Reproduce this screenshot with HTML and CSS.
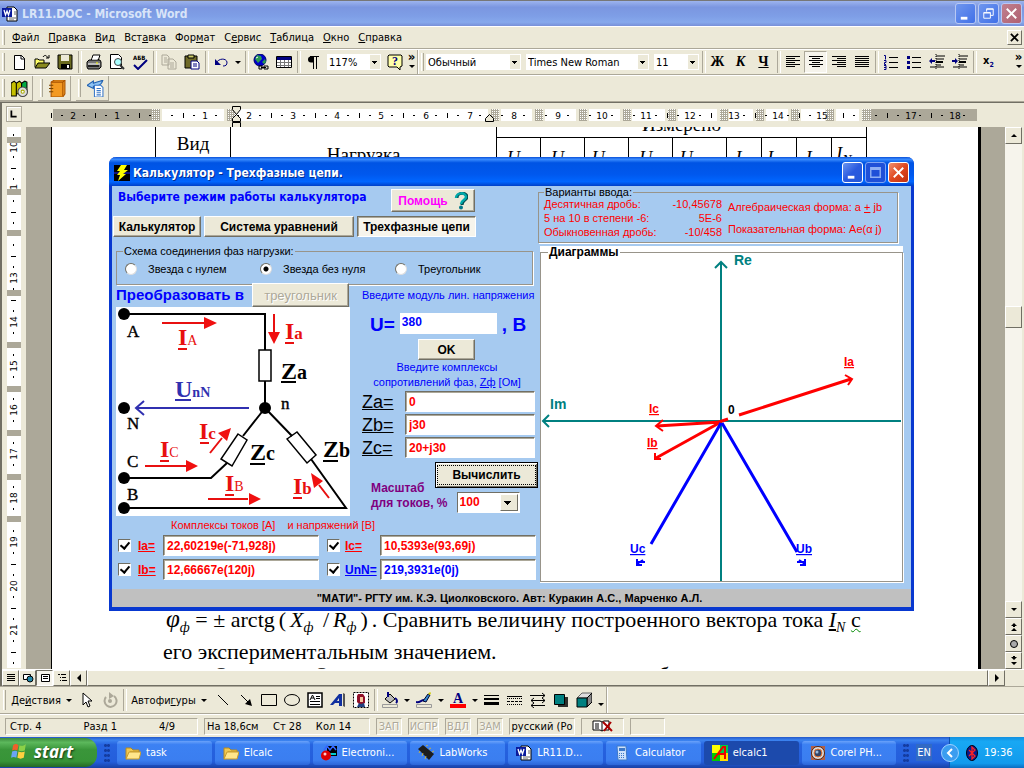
FILE: index.html
```html
<!DOCTYPE html>
<html lang="ru">
<head>
<meta charset="utf-8">
<title>LR11.DOC - Microsoft Word</title>
<link rel="stylesheet" href="styles.css">
</head>
<body>
<svg class="defs" aria-hidden="true">
  <symbol id="word" viewBox="0 0 16 16"><path d="M5 1h7l3 3v11H5z" fill="#fff" stroke="#000"/><path d="M12 6h2M12 8h2M7 12h7M7 14h5" stroke="#666"/><path d="M0 2h10v9H0z" fill="#0a1a9c"/><path d="M2 4l1.500 5L5 5l1.500 4L8 4" fill="none" stroke="#fff" stroke-width="1.300"/></symbol>
  <symbol id="folder" viewBox="0 0 16 16"><path d="M1 3h5l2 2h6v2H5L2 14H1z" fill="#f0c850" stroke="#b58a20"/><path d="M4 7h12l-2 7H1z" fill="#ffe68c" stroke="#c79a2c"/></symbol>
  <symbol id="outdent" viewBox="0 0 16 16"><path d="M7 2h9M1 13h14M7 5h8M7 11h5" stroke="#000"/><path d="M7 8h7" stroke="#000" stroke-width="2"/><path d="M7 0v16" stroke="#000" stroke-dasharray="1 1"/></symbol>
</svg>

<header class="titlebar">
  <svg class="i16"><use href="#word"/></svg>
  <h1>LR11.DOC - Microsoft Word</h1>
  <div class="winbtns faded">
    <button aria-label="Свернуть"><svg viewBox="0 0 18 18"><path d="M4 14h7" stroke="#fff" stroke-width="3"/></svg></button>
    <button aria-label="Восстановить"><svg viewBox="0 0 18 18"><path d="M7 7V4h7v7h-3M4 8h7v6H4zM4 8.500h7M7 4.500h7" fill="none" stroke="#fff"/></svg></button>
    <button class="close" aria-label="Закрыть"><svg viewBox="0 0 18 18"><path d="M4 4l10 10M14 4L4 14" stroke="#fff" stroke-width="2"/></svg></button>
  </div>
</header>

<nav class="menubar">
  <i class="grip"></i>
  <button><u>Ф</u>айл</button><button><u>П</u>равка</button><button><u>В</u>ид</button><button>Вст<u>а</u>вка</button><button>Фор<u>м</u>ат</button><button>С<u>е</u>рвис</button><button><u>Т</u>аблица</button><button><u>О</u>кно</button><button><u>С</u>правка</button>
  <button class="docclose" aria-label="Закрыть документ"><svg viewBox="0 0 10 10"><path d="M1 1l8 8M9 1L1 9" stroke="#000" stroke-width="2"/></svg></button>
</nav>

<div class="toolbar">
  <i class="grip"></i>
  <button class="tb" aria-label="Создать"><svg viewBox="0 0 16 16"><path d="M3.500 1.500h7l3 3v11h-10z" fill="#fff" stroke="#000"/><path d="M10 1v4h4" fill="none" stroke="#000"/></svg></button>
  <button class="tb" aria-label="Открыть"><svg viewBox="0 0 16 16"><path d="M1 13V5h3l1 1h5v3" fill="#ff6" stroke="#000"/><path d="M4 9h12l-4 5H1z" fill="#8a8a20" stroke="#000"/><path d="M9 3c2-3 4-1 5 1M15 1v3h-3" fill="none" stroke="#000"/></svg></button>
  <button class="tb" aria-label="Сохранить"><svg viewBox="0 0 16 16"><path d="M1 1h14v14H2l-1-1z" fill="#6a6a20" stroke="#000"/><path d="M4 1h8v6H4z" fill="#ece9d8"/><path d="M4 10h9v5H4z" fill="#000"/><path d="M10 11h2v3h-2z" fill="#fff"/></svg></button>
  <i class="sep"></i>
  <button class="tb" aria-label="Печать"><svg viewBox="0 0 16 16"><path d="M5 7l2-6h7l-2 6" fill="#fff" stroke="#000"/><path d="M1 8l2-2h11l1 2v5l-2 2H2l-1-2z" fill="#777" stroke="#000"/><path d="M7 3h5M6 5h5M2 10h12" stroke="#fff"/><path d="M2 12h11" stroke="#222" stroke-width="2"/><path d="M10 9h2" stroke="#ff0"/></svg></button>
  <button class="tb" aria-label="Просмотр"><svg viewBox="0 0 16 16"><path d="M1.500.500h8l3 3v11h-11z" fill="#fff" stroke="#000"/><circle cx="9" cy="8" r="3.500" fill="#aff" stroke="#444"/><path d="M11 11l4 4" stroke="#333" stroke-width="2"/></svg></button>
  <button class="tb" aria-label="Правописание"><svg viewBox="0 0 16 16"><path d="M2 11l4 4 9-9" fill="none" stroke="#000080" stroke-width="2"/><text x="1" y="6" class="abc">АБВ</text></svg></button>
  <i class="sep"></i>
  <button class="tb" aria-label="Копировать" disabled><svg viewBox="0 0 16 16"><path d="M1 1h5l2 2v8H1zM7 5h5l3 3v7H7z" fill="#ece9d8" stroke="#aca899"/><path d="M3 4h3M3 6h3M3 8h3M9 9h4M9 11h4M9 13h4" stroke="#aca899"/></svg></button>
  <button class="tb" aria-label="Вставить"><svg viewBox="0 0 16 16"><path d="M1 2h12v12H1z" fill="#6f6a28" stroke="#000"/><path d="M4 1h6v3H4z" fill="#cc6" stroke="#000"/><path d="M7 7h6l2 2v6H7z" fill="#fff" stroke="#000080"/><path d="M9 10h4M9 12h4" stroke="#000080"/></svg></button>
  <i class="sep"></i>
  <button class="tb" aria-label="Отменить"><svg viewBox="0 0 16 16"><path d="M3 9c3-5 10-5 11-1 0 3-1 4-4 4" fill="none" stroke="#000080"/><path d="M2 5v6h6z" fill="#000080"/></svg></button>
  <button class="dd" aria-label="Список отмен"><i class="tri"></i></button>
  <i class="sep"></i>
  <button class="tb" aria-label="Гиперссылка"><svg viewBox="0 0 16 16"><circle cx="7" cy="6" r="6" fill="#00c" stroke="#006"/><path d="M4 1l4 1 1 3-4 4-3-4zM9 8l3-3 1 3-2 2z" fill="#2a9a55"/><path d="M3 4l2-1" stroke="#fff"/><path d="M6 12h3v3H6zM11 12h4v3h-4zM8 13.500h5" fill="#ddd" stroke="#000"/></svg></button>
  <button class="tb" aria-label="Таблица"><svg viewBox="0 0 16 16"><path d="M.500 2.500h15v11H.500z" fill="#fff" stroke="#000"/><path d="M1 3h14v3H1z" fill="#000080"/><path d="M1 8.500h14M1 11.500h14M4.500 6v7M8.500 6v7M12.500 6v7" stroke="#777"/></svg></button>
  <i class="sep"></i>
  <button class="tb" aria-label="Непечатаемые знаки"><svg viewBox="0 0 16 16"><path d="M8 2.500H6a3 3 0 0 0 0 6h2z" fill="#000"/><path d="M5 2.500h9M8.500 2v13M11.500 2v13" stroke="#000"/></svg></button>
  <label class="combo zoom"><select aria-label="Масштаб"><option>117%</option></select></label>
  <button class="tb" aria-label="Справка"><svg viewBox="0 0 16 16"><path d="M2 1h12l1 1v10l-2 1v3l-3-3H2l-1-1V2z" fill="#ffffa8" stroke="#000"/><text x="8" y="11" class="q">?</text></svg></button>
  <button class="more" aria-label="Другие кнопки"><b>»</b><i class="tri"></i></button>
  <i class="edge"></i>
  <i class="grip"></i>
  <label class="combo style"><select aria-label="Стиль"><option>Обычный</option></select></label>
  <label class="combo font"><select aria-label="Шрифт"><option>Times New Roman</option></select></label>
  <label class="combo size"><select aria-label="Размер"><option>11</option></select></label>
  <i class="sep"></i>
  <button class="tb letter">Ж</button><button class="tb letter"><em>К</em></button><button class="tb letter"><u>Ч</u></button>
  <i class="sep"></i>
  <button class="tb" aria-label="По левому краю"><svg viewBox="0 0 16 16"><path d="M1 2.500h14M1 4.500h9M1 6.500h14M1 8.500h9M1 10.500h14M1 12.500h9" stroke="#000"/></svg></button>
  <button class="tb pressed" aria-label="По центру"><svg viewBox="0 0 16 16"><path d="M1 2.500h14M4 4.500h8M1 6.500h14M4 8.500h8M1 10.500h14M4 12.500h8" stroke="#000"/></svg></button>
  <button class="tb" aria-label="По правому краю"><svg viewBox="0 0 16 16"><path d="M1 2.500h14M6 4.500h9M1 6.500h14M6 8.500h9M1 10.500h14M6 12.500h9" stroke="#000"/></svg></button>
  <button class="tb" aria-label="По ширине"><svg viewBox="0 0 16 16"><path d="M1 2.500h14M1 4.500h14M1 6.500h14M1 8.500h14M1 10.500h14M1 12.500h14" stroke="#000"/></svg></button>
  <i class="sep"></i>
  <button class="tb" aria-label="Нумерация"><svg viewBox="0 0 16 16"><path d="M6 3.500h9M6 8.500h9M6 13.500h9" stroke="#000"/><path d="M1 1.500h1.500v4M1 6.500h2v2H1.500v2H3M1 11.500h2v4H1M1 13.500h2" fill="none" stroke="#000080"/></svg></button>
  <button class="tb" aria-label="Маркеры"><svg viewBox="0 0 16 16"><path d="M6 3.500h9M6 8.500h9M6 13.500h9" stroke="#000"/><path d="M1 2h3v3H1zM1 7h3v3H1zM1 12h3v3H1z" fill="#000080"/></svg></button>
  <button class="tb" aria-label="Уменьшить отступ"><svg viewBox="0 0 16 16"><use href="#outdent"/><path d="M0 7l3-3v2h3v2H3v2z" fill="#000080"/></svg></button>
  <button class="tb" aria-label="Увеличить отступ"><svg viewBox="0 0 16 16"><use href="#outdent"/><path d="M6 7L3 4v2H0v2h3v2z" fill="#000080"/></svg></button>
  <i class="sep"></i>
  <button class="tb sub">x<sub>2</sub></button>
  <button class="more last" aria-label="Другие кнопки"><b>»</b><i class="tri"></i></button>
</div>

<div class="toolbar2">
  <div class="mini"><i class="grip"></i><button aria-label="Словари"><svg viewBox="0 0 16 16"><path d="M0 3l3-2 2 2v12H0zM5 3l3-2 2 2v10H5z" fill="#c6c000" stroke="#000"/><path d="M10 3l3-2 2 1v8h-5z" fill="#0a4" stroke="#000"/><circle cx="11" cy="11" r="4.500" fill="#ddd" stroke="#444"/><circle cx="11" cy="11" r="1.500" fill="#fff" stroke="#aa0"/></svg></button></div>
  <div class="mini"><i class="grip"></i><button aria-label="Книга"><svg viewBox="0 0 16 16"><path d="M2 2l3-2h10v13l-2 3H2z" fill="#f39a22" stroke="#a85200"/><path d="M2 2h11v13M13 2l2-2" fill="none" stroke="#a85200"/><path d="M0 5h4M0 8h4M0 11h4" stroke="#774400"/></svg></button></div>
  <div class="mini"><i class="grip"></i><button aria-label="Перевод"><svg viewBox="0 0 16 16"><path d="M0 5l6-4v2c5-2 8-2 9-3-1 4-4 6-9 6v2z" fill="#8fc4f4" stroke="#2060b0"/><path d="M7 5h6l2 2v9H7z" fill="#fff" stroke="#3a78c8"/><path d="M9 8h4M9 10h4M9 12h4M9 14h4" stroke="#3a78c8"/></svg></button></div>
</div>

<main class="work">
  <div class="hruler">
    <button class="tabstop" aria-label="Табуляция"><svg viewBox="0 0 16 16"><path d="M5 4v7h6" fill="none" stroke="#000" stroke-width="2"/></svg></button>
    <svg class="hscale" viewBox="22 102 984 25" width="984" height="25">
      <defs>
        <pattern id="ticks" x="73" y="108" width="44" height="12" patternUnits="userSpaceOnUse"><path d="M10 6h2v1h-2zM32 6h2v1h-2zM22 4h1v5h-1z" fill="#000"/></pattern>
        <pattern id="dots" width="2" height="2" patternUnits="userSpaceOnUse"><path d="M0 0h2v2H0z" fill="#aca899"/><path d="M0 0h1v1H0z" fill="#fff"/></pattern>
      </defs>
      <path d="M53 108h100v12H53zM871 108h106v12H871z" fill="#aca899"/>
      <path d="M162 108h62v12h-62zM235 108h253v12H235zM501 108h31v12h-31zM545 108h31v12h-31zM589 108h31v12h-31zM632 108h33v12h-33zM678 108h39v12h-39zM729 108h24v12h-24zM766 108h22v12h-22zM801 108h24v12h-24zM836 108h23v12h-23z" fill="#fff"/>
      <path d="M51 108h922v12H51z" fill="url(#ticks)"/>
      <path d="M151 108h9v12h-9zM227 108h8v12h-8zM491 108h8v12h-8zM535 108h8v12h-8zM579 108h8v12h-8zM623 108h8v12h-8zM668 108h8v12h-8zM720 108h8v12h-8zM756 108h8v12h-8zM791 108h8v12h-8zM826 108h8v12h-8zM862 108h9v12h-9z" fill="url(#dots)"/>
      <g class="rnum"><text x="73" y="118">2</text><text x="117" y="118">1</text><text x="205" y="118">1</text><text x="249" y="118">2</text><text x="293" y="118">3</text><text x="337" y="118">4</text><text x="381" y="118">5</text><text x="426" y="118">6</text><text x="470" y="118">7</text><text x="514" y="118">8</text><text x="558" y="118">9</text><text x="602" y="118">10</text><text x="646" y="118">11</text><text x="690" y="118">12</text><text x="734" y="118">13</text><text x="778" y="118">14</text><text x="822" y="118">15</text><text x="911" y="118">17</text><text x="955" y="118">18</text></g>
      <path d="M232.500 105.500h8v3l-4 5-4-5zM232.500 120.500v-3l4-4 4 4v3zM232.500 121.500h8v5h-8zM485.500 120.500v-3l4-4 4 4v3z" fill="#ece9d8" stroke="#000"/>
    </svg>
  </div>
  <div class="mid">
    <svg class="vscale" viewBox="7 127 14 541" width="14">
      <defs><pattern id="vticks" x="7" y="146" width="14" height="44" patternUnits="userSpaceOnUse"><path d="M6 10h1v2h-1zM6 32h1v2h-1zM4 22h5v1h-5z" fill="#000"/></pattern></defs>
      <path d="M7 127h14v541H7z" fill="#fff"/><path d="M7 127h14v541H7z" fill="url(#vticks)"/>
      <g class="rnum"><text transform="translate(17 147) rotate(-90)">10</text><text transform="translate(17 187) rotate(-90)">1</text><text transform="translate(17 278) rotate(-90)">13</text><text transform="translate(17 322) rotate(-90)">14</text><text transform="translate(17 366) rotate(-90)">15</text><text transform="translate(17 410) rotate(-90)">16</text><text transform="translate(17 454) rotate(-90)">17</text><text transform="translate(17 498) rotate(-90)">18</text><text transform="translate(17 542) rotate(-90)">19</text><text transform="translate(17 586) rotate(-90)">20</text><text transform="translate(17 630) rotate(-90)">21</text></g>
      <path d="M7 137h14v6H7zM7 189h14v6H7zM7 230h14v6H7zM7 290h14v6H7zM7 342h14v6H7zM7 386h14v6H7zM7 430h14v6H7zM7 474h14v6H7zM7 516h14v6H7z" fill="#aca899"/>
    </svg>
    <div class="desk">
      <article class="page">
        <table class="meas">
          <colgroup><col class="w75"><col class="w265"><col class="w44"><col class="w44"><col class="w44"><col class="w44"><col class="w53"><col class="w35"><col class="w35"><col class="w35"><col class="w35"></colgroup>
          <tr class="r1"><th rowspan="2" class="kind">Вид</th><th rowspan="2" class="load">Нагрузка</th><th colspan="9">Измерено</th></tr>
          <tr class="r2"><td>U</td><td>U</td><td>U<sub>b</sub></td><td>U</td><td>U<sub>nN</sub></td><td>I</td><td>I<sub>b</sub></td><td>I</td><td class="up">I<sub>N</sub></td></tr>
        </table>
        <div class="prose">
          <p><i class="phi">φ</i><sub>ф</sub> = ± arctg<span class="thin">(</span><i>X</i><sub>ф</sub> <span class="thin">/</span><i>R</i><sub>ф</sub><span class="thin">)</span>. Сравнить величину построенного вектора тока <i><u>I</u></i><sub>N</sub> <span class="spell">с</span></p>
          <p>его экспериментальным значением.</p>
          <p class="cut"><span>О</span><span>О</span><span>б</span></p>
        </div>
      </article>
    </div>
    <div class="vscroll">
      <button aria-label="Вверх"><i class="tri upt"></i></button>
      <div class="track"><div class="thumb"></div></div>
      <button aria-label="Вниз"><i class="tri"></i></button>
      <button aria-label="Предыдущая страница"><svg viewBox="0 0 10 10"><path d="M2 4l3-3 3 3zM2 9l3-3 3 3zM4 4h2v1H4z"/></svg></button>
      <button aria-label="Объект перехода"><svg viewBox="0 0 10 10"><circle cx="5" cy="5" r="3.500" fill="#aaa" stroke="#000"/></svg></button>
      <button aria-label="Следующая страница"><svg viewBox="0 0 10 10"><path d="M2 1l3 3 3-3zM2 6l3 3 3-3zM4 0h2v1H4z"/></svg></button>
    </div>
  </div>
  <div class="hscroll">
    <button aria-label="Обычный"><svg viewBox="0 0 12 12"><path d="M2 2.500h8M2 4.500h8M2 6.500h8M2 8.500h8" stroke="#000"/></svg></button>
    <button aria-label="Веб-документ"><svg viewBox="0 0 12 12"><path d="M1.500 2.500h7v5h-7z" fill="#fff" stroke="#000"/><circle cx="8" cy="7" r="3" fill="#28a" stroke="#000"/></svg></button>
    <button class="on" aria-label="Разметка"><svg viewBox="0 0 12 12"><path d="M2.500 2.500h8v7h-8z" fill="#fff" stroke="#000"/><path d="M4 4.500h5M4 6.500h5" stroke="#000"/></svg></button>
    <button aria-label="Структура"><svg viewBox="0 0 12 12"><path d="M2 2.500h2M5 2.500h5M4 5.500h1M6 5.500h4M4 8.500h1M6 8.500h5" stroke="#000"/></svg></button>
    <button aria-label="Влево"><svg viewBox="0 0 12 12"><path d="M8 2v8L4 6z"/></svg></button>
    <div class="bar"></div>
    <button aria-label="Вправо"><svg viewBox="0 0 12 12"><path d="M4 2v8l4-4z"/></svg></button>
    <div class="corner"></div>
  </div>
</main>

<div class="drawbar">
  <i class="grip"></i>
  <button class="txt"><span>Де<u>й</u>ствия</span><i class="tri"></i></button>
  <button class="tb" aria-label="Выбор объектов"><svg viewBox="0 0 16 16"><path d="M4 1v12l3-3 2 5 2-1-2-5h4z" fill="#fff" stroke="#000"/></svg></button>
  <button class="tb" aria-label="Вращение" disabled><svg viewBox="0 0 16 16"><path d="M4 5a6 6 0 1 0 8-1" fill="none" stroke="#aca899" stroke-width="2"/><path d="M7 0v7l5-3z" fill="#aca899"/><circle cx="8" cy="9" r="2" fill="#aca899"/></svg></button>
  <i class="sep"></i>
  <button class="txt auto"><span>Автофи<u>г</u>уры</span><i class="tri"></i></button>
  <button class="tb" aria-label="Линия"><svg viewBox="0 0 16 16"><path d="M3 3l10 10" stroke="#000"/></svg></button>
  <button class="tb" aria-label="Стрелка"><svg viewBox="0 0 16 16"><path d="M3 3l7 7" stroke="#000"/><path d="M14 14l-2-7-5 5z"/></svg></button>
  <button class="tb" aria-label="Прямоугольник"><svg viewBox="0 0 16 16"><path d="M.500 2.500h15v11H.500z" fill="none" stroke="#000"/></svg></button>
  <button class="tb" aria-label="Овал"><svg viewBox="0 0 16 16"><ellipse cx="8" cy="8" rx="7.500" ry="5.500" fill="none" stroke="#000"/></svg></button>
  <button class="tb" aria-label="Надпись"><svg viewBox="0 0 16 16"><path d="M1 1h14v14H1z" fill="#fff" stroke="#000" stroke-width="1.500"/><path d="M3 8l2.500-5L8 8M4 6h3M9 4.500h4M9 6.500h4M3 9.500h10M3 12.500h10" fill="none" stroke="#000"/></svg></button>
  <button class="tb" aria-label="WordArt"><svg viewBox="0 0 16 16"><path d="M0 13L9 2h3v12H9v-3H5l-2 2zM7 9h2V6z" fill="#1030a0" fill-rule="evenodd"/><path d="M13 1l2 1v13l-2-1z" fill="#555"/></svg></button>
  <button class="tb" aria-label="Картинка"><svg viewBox="0 0 16 16"><path d="M.500.500h15v15H.500z" fill="#fff" stroke="#000" stroke-dasharray="2 1"/><path d="M5 2h5l2 3v6l-2 1H6l-2-2V4z" fill="#901028"/><path d="M7 5h3v5H7z" fill="#f6c8a0"/><path d="M4 15l2-4 2 1 3-1 1 4z" fill="#204080"/></svg></button>
  <i class="sep"></i>
  <button class="tb" aria-label="Заливка"><svg viewBox="0 0 16 16"><path d="M3 7l5-5 5 5-5 4z" fill="#bbb" stroke="#000"/><path d="M6 0v5M13 6c3 2 2 4 1 5" fill="none" stroke="#000080" stroke-width="2"/><path d="M.500 12.500h15v3H.500z" fill="#ece9d8" stroke="#999"/></svg></button><button class="dd" aria-label="Цвет заливки"><i class="tri"></i></button>
  <button class="tb" aria-label="Цвет линий"><svg viewBox="0 0 16 16"><path d="M0 10c4 1 5-2 8-2" fill="none" stroke="#000080" stroke-width="2"/><path d="M7 9l5-7 2 1-4 7z" fill="#38c" stroke="#003"/><path d="M12 2l2-2 1 1-1 2z" fill="#cc0"/><path d="M.500 12.500h15v3H.500z" fill="#ece9d8" stroke="#999"/></svg></button><button class="dd" aria-label="Палитра линий"><i class="tri"></i></button>
  <button class="tb" aria-label="Цвет шрифта"><svg viewBox="0 0 16 16"><text x="8" y="11" class="fontA">A</text><path d="M0 12h16v4H0z" fill="#f00"/></svg></button><button class="dd" aria-label="Палитра шрифта"><i class="tri"></i></button>
  <button class="tb" aria-label="Тип линии"><svg viewBox="0 0 16 16"><path d="M0 3.500h15" stroke="#000"/><path d="M0 7h15" stroke="#000" stroke-width="2"/><path d="M0 11.500h15" stroke="#000" stroke-width="3"/></svg></button>
  <button class="tb" aria-label="Тип штриха"><svg viewBox="0 0 16 16"><path d="M0 4.500h15" stroke="#000"/><path d="M0 6.500h15M0 12.500h15" stroke="#000" stroke-dasharray="1 1"/><path d="M0 9.500h15" stroke="#000" stroke-dasharray="3 1"/></svg></button>
  <button class="tb" aria-label="Тип стрелки"><svg viewBox="0 0 16 16"><path d="M0 3.500h15M12 1l3 2.500L12 6M1 8.500h14M4 6L1 8.500 4 11M12 6l3 2.500L12 11M1 13.500h14M4 11l-3 2.500L4 16" fill="none" stroke="#000"/></svg></button>
  <button class="tb" aria-label="Тень"><svg viewBox="0 0 16 16"><path d="M5 5h10v10H5z" fill="#000" opacity=".8"/><path d="M1.500 2.500h10v10h-10z" fill="#008080" stroke="#000"/></svg></button>
  <button class="tb" aria-label="Объем"><svg viewBox="0 0 16 16"><path d="M1 6l5-5h10l-5 5z" fill="#ddd" stroke="#666"/><path d="M11 6l5-5v9l-5 5z" fill="#888" stroke="#000"/><path d="M1 6h10v9H1z" fill="#008080" stroke="#000"/></svg></button>
  <button class="dd low" aria-label="Настройка"><i class="tri"></i></button>
  <i class="edge"></i>
</div>

<footer class="status">
  <div class="f pos"><span>Стр. 4</span><span>Разд 1</span><span>4/9</span></div>
  <div class="f cur-pos"><span>На 18,6см</span><span>Ст 28</span><span>Кол 14</span></div>
  <div class="f off">ЗАП</div><div class="f off">ИСПР</div><div class="f off">ВДЛ</div><div class="f off">ЗАМ</div>
  <div class="f lang">русский (Ро</div>
  <div class="f book"><svg viewBox="0 0 22 14"><path d="M1 2h7l2 1 2-1h5v9h-5l-2 1-2-1H1zM10 3v9" fill="#fff" stroke="#000"/><path d="M3 5h4M3 7h4M3 9h4" stroke="#000"/><path d="M11 3l9 9M19 3l-7 9" stroke="#a00" stroke-width="2"/></svg></div>
  <div class="f blank"></div>
</footer>

<nav class="taskbar">
  <button class="start"><svg viewBox="0 0 18 18"><path d="M3 3c2-2 4-1 5 0L7 8C5 7 4 7 2 8z" fill="#f0602a"/><path d="M9 3c2 1 4 1 6-1l-1 6c-2 1-4 1-6 0z" fill="#8bd048"/><path d="M2 9c2-1 4-1 5 0l-1 6c-2-1-3-1-5 0z" fill="#6ba4f4"/><path d="M8 9c2 1 4 1 6 0l-1 6c-2 1-4 1-6 0z" fill="#ffd040"/></svg>start</button>
  <i class="grab"></i>
  <div class="tasks">
    <button><svg class="i16"><use href="#folder"/></svg>task</button>
    <button><svg class="i16"><use href="#folder"/></svg>Elcalc</button>
    <button><svg class="i16" viewBox="0 0 16 16"><path d="M6 1h10v10H6z" fill="#000"/><path d="M3 5l3-4 3 4 3-4 3 4" fill="none" stroke="#36f" stroke-width="1.500"/><path d="M7 9h8" stroke="#0cc" stroke-width="2"/><circle cx="5" cy="10.500" r="5" fill="#d00"/><circle cx="4" cy="9" r="1.500" fill="#fcc"/></svg>Electroni...</button>
    <button><svg class="i16" viewBox="0 0 16 16"><path d="M0 4l5-4 11 9-5 6z" fill="#1c1c1c"/><path d="M2 6l-1 2M5 8l-1 3M8 11l-1 3M8 1l2-1M11 4l2-1M14 7l2-1" stroke="#c8b040"/></svg>LabWorks</button>
    <button><svg class="i16"><use href="#word"/></svg>LR11.D...</button>
    <button><svg class="i16" viewBox="0 0 16 16"><path d="M3 1h9l1 14H4z" fill="#cfe2fb" stroke="#3c78c8"/><path d="M5 3h6v3H5z" fill="#3c78c8"/><path d="M5 8.500h6M5 10.500h6M5 12.500h6" stroke="#3c78c8" stroke-dasharray="1 1"/></svg>Calculator</button>
    <button class="active"><svg class="i16" viewBox="0 0 16 16"><path d="M0 0h8v8H0z" fill="#ff0"/><path d="M8 0h8v8H8z" fill="#0c4"/><path d="M0 8h8v8H0z" fill="#0c0"/><path d="M8 8h8v8H8z" fill="#fd0"/><path d="M2 14L11 2h2v12M6 9h7" fill="none" stroke="#e00" stroke-width="2"/></svg>elcalc1</button>
    <button><svg class="i16" viewBox="0 0 16 16"><path d="M1 1h14v14H1z" fill="#b06048"/><circle cx="8" cy="8" r="6.500" fill="#ddd" stroke="#502010"/><circle cx="8" cy="8" r="4" fill="#346" stroke="#e73"/><circle cx="7" cy="7" r="1.500" fill="#9bd"/></svg>Corel PH...</button>
  </div>
  <i class="grab"></i>
  <span class="en">EN</span>
  <div class="tray">
    <button aria-label="Показать значки"><svg viewBox="0 0 18 18"><circle cx="9" cy="9" r="8.500" fill="#3a9df0" stroke="#9fd2ff"/><path d="M11 5L7 9l4 4" fill="none" stroke="#fff" stroke-width="2"/></svg></button>
    <svg class="bt" viewBox="0 0 12 16"><ellipse cx="6" cy="8" rx="5.500" ry="7.500" fill="#0a1a8c" stroke="#001"/><path d="M3 5l6 6-3 3V2l3 3-6 6" fill="none" stroke="#f22" stroke-width="1.300"/></svg>
    <time>19:36</time>
  </div>
</nav>

<section class="calc" aria-label="Калькулятор">
  <div class="calc-title">
    <svg class="i16" viewBox="0 0 16 16"><path d="M0 0h16v16H0z"/><path d="M0 8h16" stroke="#22f"/><path d="M7 0h6l-3 5h4l-5 4h3l-8 7 2-6H3l3-4H3z" fill="#ff0"/></svg>
    <h2>Калькулятор - Трехфазные цепи.</h2>
    <div class="winbtns">
      <button aria-label="Свернуть окно"><svg viewBox="0 0 18 18"><path d="M4 14h7" stroke="#fff" stroke-width="3"/></svg></button>
      <button class="dim" aria-label="Развернуть окно" disabled><svg viewBox="0 0 18 18"><path d="M4 4h10v10H4zM4 5.500h10" fill="none" stroke="#8fb0f4" stroke-width="1.500"/></svg></button>
      <button class="close" aria-label="Закрыть окно"><svg viewBox="0 0 18 18"><path d="M4 4l10 10M14 4L4 14" stroke="#fff" stroke-width="2"/></svg></button>
    </div>
  </div>
  <form class="calc-body">
    <div class="left">
      <div class="mode"><h3>Выберите режим работы калькулятора</h3>
        <button type="button" class="btn help">Помощь <svg viewBox="0 0 14 18"><path d="M3 6c0-6 10-6 10-1 0 3-5 3-5 8" fill="none" stroke="#004c50" stroke-width="3"/><path d="M2 6c0-6 10-6 10-1 0 3-5 3-5 7" fill="none" stroke="#0aa" stroke-width="2.500"/><circle cx="7" cy="15.500" r="2" fill="#078"/></svg></button></div>
      <div class="tabs"><button type="button" class="btn t1">Калькулятор</button><button type="button" class="btn t2">Система уравнений</button><button type="button" class="btn t3 down">Трехфазные цепи</button></div>
      <fieldset class="scheme"><legend>Схема соединения фаз нагрузки:</legend>
        <label><input type="radio" name="s">Звезда с нулем</label><label><input type="radio" name="s" checked>Звезда без нуля</label><label><input type="radio" name="s">Треугольник</label>
      </fieldset>
      <div class="cols">
        <div class="c1">
          <div class="conv"><span>Преобразовать в</span><button type="button" class="btn" disabled>треугольник</button></div>
          <svg class="circuit" viewBox="116 307 234 209" width="234" height="209">
            <path d="M116 307h234v209H116z" fill="#fff"/>
            <g fill="none" stroke="#000" stroke-width="2"><path d="M124 314h141v36M265 381v27l-22 28M227 463l-16 15h-87M265 408l27 28M311 459l35 49H124"/><path d="M259 350h12v31h-12zM238 434l9 6-15 26-11-7zM287 439l10-7 19 23-9 8z" stroke-width="1.500"/></g>
            <g><circle cx="124" cy="314" r="6"/><circle cx="124" cy="408" r="6"/><circle cx="265" cy="408" r="6"/><circle cx="124" cy="478" r="6"/><circle cx="124" cy="508" r="6"/></g>
            <g stroke="#e81010" stroke-width="2"><path d="M162 323h43M274 314v20M145 466h41M208 499h40M210 453l12-15M329 498l-10-13"/></g>
            <path d="M217 323l-13-6v12zM274 344l-6-12h12zM198 466l-12-6v12zM261 499l-12-6v12zM231 428l-4 13-9-8zM311 473l12 8-9 7z" fill="#f01010"/>
            <path d="M249 408H137M144 401l-8 7 8 7" fill="none" stroke="#3030b0" stroke-width="2"/>
            <g class="node"><text x="127" y="337">A</text><text x="127" y="429">N</text><text x="127" y="467">C</text><text x="127" y="500">B</text><text x="281" y="409">n</text></g>
            <g class="amp"><text x="178" y="345">I<tspan>A</tspan></text><text x="285" y="339">I<tspan class="b">a</tspan></text><text x="199" y="439">I<tspan class="b">c</tspan></text><text x="160" y="457">I<tspan>C</tspan></text><text x="225" y="491">I<tspan>B</tspan></text><text x="293" y="494">I<tspan class="b">b</tspan></text></g>
            <path d="M178 349h9M285 343h9M200 443h9M160 461h9M225 495h9M293 498h9" stroke="#e81010" stroke-width="2"/>
            <g class="volt"><text x="175" y="397">U<tspan>nN</tspan></text></g><path d="M175 400h16" stroke="#3030b0" stroke-width="2"/>
            <g class="imp"><text x="281" y="379">Z<tspan>a</tspan></text><text x="250" y="460">Z<tspan>c</tspan></text><text x="323" y="457">Z<tspan>b</tspan></text></g>
            <path d="M281 382h15M250 464h15M323 461h15" stroke="#000" stroke-width="2"/>
          </svg>
        </div>
        <div class="c2">
          <label class="blue" for="u">Введите модуль лин. напряжения</label>
          <div class="urow"><b>U=</b><input id="u" value="380"><b class="unit">, B</b></div>
          <button type="button" class="btn ok">OK</button>
          <p class="blue two">Введите комплексы<br>сопротивлений фаз, <u>Zф</u> [Ом]</p>
          <div class="zrow"><label for="za">Za=</label><input id="za" value="0"></div>
          <div class="zrow"><label for="zb">Zb=</label><input id="zb" value="j30"></div>
          <div class="zrow"><label for="zc">Zc=</label><input id="zc" value="20+j30"></div>
          <button type="button" class="btn go"><span>Вычислить</span></button>
          <div class="scale"><label for="sc">Масштаб<br>для токов, %</label><span class="pick"><select id="sc"><option>100</option></select></span></div>
        </div>
      </div>
      <p class="res-head"><span>Комплексы токов [A]</span><span>и напряжений [B]</span></p>
      <div class="res">
        <input type="checkbox" checked aria-label="Показать Ia"><label for="ia">Ia=</label><input id="ia" value="22,60219e(-71,928j)">
        <input type="checkbox" checked aria-label="Показать Ic"><label for="ic">Ic=</label><input id="ic" value="10,5393e(93,69j)">
        <input type="checkbox" checked aria-label="Показать Ib"><label for="ib">Ib=</label><input id="ib" value="12,66667e(120j)">
        <input type="checkbox" checked aria-label="Показать UnN"><label for="un" class="bl">UnN=</label><input id="un" class="bl" value="219,3931e(0j)">
      </div>
    </div>
    <div class="right">
      <fieldset class="hints"><legend>Варианты ввода:</legend>
        <dl><dt>Десятичная дробь:</dt><dd>-10,45678</dd><dt>5 на 10 в степени -6:</dt><dd>5E-6</dd><dt>Обыкновенная дробь:</dt><dd>-10/458</dd></dl>
        <div class="forms"><span>Алгебраическая форма: a <u>+</u> jb</span><span>Показательная форма: Ae(α j)</span></div>
      </fieldset>
      <div class="plot"><fieldset><legend>Диаграммы</legend>
        <svg viewBox="541 258 360 323" width="360" height="323">
          <g fill="none" stroke="#008080" stroke-width="2"><path d="M721 581V262M715 268l6-6 6 6M901 421H543M549 415l-6 6 6 6"/></g>
          <g fill="none" stroke="#f00" stroke-width="3"><path d="M716 423l12-4M739 415l112-36M721 422l-64 4M721 422l-65 36"/><path d="M845 375l7 4-4 6M663 420l-7 6 7 5M655 453v6h6" stroke-width="2"/></g>
          <g fill="none" stroke="#00f" stroke-width="3"><path d="M721 423l-70 121M722 423l75 129"/></g>
          <path d="M637 559v7M637 564l6-4M638 562h7M638 565h4M805 559v7M805 564l-6-4M804 562h-7M804 565h-4" stroke="#00f" stroke-width="2"/>
          <g class="pl"><text x="844" y="366" class="r">Ia</text><text x="649" y="413" class="r">Ic</text><text x="647" y="447" class="r">Ib</text><text x="630" y="553" class="b">Uc</text><text x="796" y="553" class="b">Ub</text><text x="728" y="414">0</text><text x="734" y="265" class="ax">Re</text><text x="550" y="409" class="ax">Im</text></g>
        </svg>
      </fieldset></div>
    </div>
  </form>
  <div class="calc-foot">"МАТИ"- РГТУ им. К.Э. Циолковского. Авт: Куракин А.С., Марченко А.Л.</div>
</section>
</body>
</html>
```
FILE: styles.css
```css
:root{--face:#ece9d8;--shade:#aca899;--ui:"DejaVu Sans Condensed","Noto Sans",sans-serif;--dlg:"Liberation Sans",Arial,sans-serif}
*{box-sizing:border-box}
body{margin:0;height:100vh;overflow:hidden;display:flex;flex-direction:column;background:var(--face);font:11px var(--ui);color:#000;position:relative}
button,input,select{font:inherit;color:inherit;margin:0;padding:0;border:0;background:none;border-radius:0;outline:0}
h1,h2,h3,p,dl,dd{margin:0}
.defs{position:absolute;width:0;height:0}
.i16{width:16px;height:16px;flex:none}
/* main window caption */
.titlebar{height:27px;flex:none;display:flex;align-items:center;gap:4px;padding:1px 2px;border-top:1px solid #777;border-bottom:1px solid #fff;background:linear-gradient(#9db4ee,#7b96e0 25%,#7e9ee6 60%,#86a8ec 85%,#7890d8)}
.titlebar h1,.calc-title h2{font:bold 12px var(--ui);flex:1}
.titlebar h1{color:#d8e4f8}
.winbtns{display:flex;gap:2px}
.winbtns button{width:21px;height:21px;border:1px solid #fff;border-radius:3px;background:linear-gradient(135deg,#6a94f0,#2a5adf 50%,#2458d8);display:grid;place-items:center}
.winbtns svg{width:17px;height:17px}
.winbtns .close{background:linear-gradient(135deg,#f09070,#e04820 50%,#c03010)}
.winbtns .dim{border-color:#7da4f4;background:#1f50d8}
.faded button{border-color:#b8c8f4;background:linear-gradient(135deg,#6f96ee,#4070e8)}
.faded .close{background:linear-gradient(135deg,#c08090,#b06070)}
.grip{width:3px;align-self:stretch;margin:3px 2px;border-left:1px solid #fff;border-right:1px solid var(--shade);flex:none}
.menubar{height:22px;flex:none;display:flex;align-items:center;padding-right:2px;border-bottom:1px solid var(--shade)}
.menubar button{padding:0 4px 0 5px}
.menubar .docclose{margin-left:auto;width:15px;height:15px;padding:2px;border:1px solid;border-color:#fff #716f64 #716f64 #fff;display:grid}
.toolbar{height:26px;flex:none;display:flex;align-items:center;border-top:1px solid #fff;border-bottom:1px solid var(--shade)}
.tb{width:23px;height:22px;display:grid;place-items:center;flex:none}
.tb svg{width:16px;height:16px}
.sep{width:6px;height:22px;flex:none;border-left:2px solid transparent}
.sep::before{content:"";display:block;width:2px;height:100%;border-left:1px solid var(--shade);border-right:1px solid #fff}
.dd{width:11px;height:22px;display:grid;place-items:center;flex:none}
.tri{display:inline-block;border:3px solid transparent;border-top-color:#000;border-bottom:0}
.upt{border-top:0;border-bottom:3px solid #000}
.combo{position:relative;height:16px;background:#fff;flex:none}
.combo select,.pick select{appearance:none;width:100%;height:100%;padding-left:2px}
.combo::after{content:"";position:absolute;right:1px;top:1px;bottom:1px;width:10px;pointer-events:none;background:linear-gradient(#000,#000) 2px 6px/5px 1px no-repeat,linear-gradient(#000,#000) 3px 7px/3px 1px no-repeat,linear-gradient(#000,#000) 4px 8px/1px 1px no-repeat,var(--face)}
.zoom{width:54px;margin:0 2px 0 3px}
.style{width:95px;margin-right:5px}.font{width:123px;margin-right:5px}.size{width:45px;margin-right:1px}
.more{width:11px;height:20px;display:flex;flex-direction:column;align-items:center;justify-content:space-between;line-height:10px;flex:none}
.more b{font-size:13px}.more .tri{margin-bottom:4px}
.last{margin-left:auto}
.edge{width:2px;align-self:stretch;border-left:1px solid var(--shade);border-right:1px solid #fff}
.letter{font:bold 14px "Liberation Serif",serif}
.sub{font:bold 11px var(--ui);display:block}.sub sub{font-size:7px;color:#000080}
.pressed{border:1px solid;border-color:var(--shade) #fff #fff var(--shade);background:#f6f4ec}
.abc{font:bold 6px var(--ui)}
.q{font:bold 12px "Liberation Serif",serif;text-anchor:middle;fill:#000080}
.toolbar2{height:27px;flex:none;display:flex;gap:5px;border-bottom:1px solid var(--shade);border-top:1px solid #fff}
.mini{width:33px;display:flex;align-items:center;border-right:1px solid var(--shade);border-bottom:1px solid var(--shade)}
.mini button{width:24px;display:grid;place-items:center}.mini svg{width:17px;height:17px}
/* document area */
.work{flex:1;min-height:0;display:flex;flex-direction:column;border-top:1px solid #716f64;border-left:2px solid #716f64}
.hruler{height:24px;flex:none;display:flex}
.tabstop{width:16px;height:16px;margin:3px 0 0 4px;border:1px solid var(--shade);box-shadow:inset 1px 1px #fff;flex:none}
.tabstop svg{width:14px;height:14px;display:block}
.hscale{flex:none}
.rnum{font:9px "DejaVu Sans",sans-serif;text-anchor:middle}
.mid{flex:1;min-height:0;display:flex;overflow:hidden}
.vscale{margin:0 5px;flex:none;height:541px}
.desk{flex:1;min-width:0;background:var(--shade);padding:0 24px 0 25px;display:flex;overflow:hidden}
.page{flex:1;background:#fff;border-left:1px solid #000;border-right:3px solid #000;display:flex;flex-direction:column;justify-content:space-between;overflow:hidden;font-family:"Liberation Serif","Times New Roman",serif;font-size:22px}
.meas{border-collapse:collapse;table-layout:fixed;width:712px;margin:-10px 0 0 103px;font-size:19px}
.w75{width:75px}.w265{width:265px}.w44{width:44px}.w53{width:53px}.w35{width:35px}
.meas th,.meas td{border:1px solid #000;padding:0;font-weight:normal;text-align:center;vertical-align:top;line-height:20px}
.meas .r1{height:20px}.meas .r2{height:44px}
.meas th[colspan]{line-height:14px}
.meas .kind{padding-top:16px}
.meas .load{padding-top:27px}
.meas td{font-style:italic;font-size:18px;padding:10px 10px 0 0}
.meas .up{padding-top:6px}
.meas sub,.prose sub{font-size:14px;font-style:italic;line-height:0}
.prose{margin:0 0 -13px 111px;line-height:32px;white-space:nowrap}
.prose p:first-child{padding-left:3px}
.phi{font-size:25px;line-height:0}.thin{padding:0 4px}
.spell{text-decoration:underline wavy #080 1px}
.prose .cut{display:flex;line-height:14px;font-size:20px}.cut span:first-child{margin-left:51px}.cut span:nth-child(2){margin-left:86px}.cut span:nth-child(3){margin-left:330px}
.vscroll{width:17px;margin-right:2px;display:flex;flex-direction:column}
.vscroll button,.thumb,.hscroll button,.bar{border:1px solid;border-color:#fff #716f64 #716f64 #fff;background:var(--face)}
.vscroll button{height:17px;display:grid;place-items:center;flex:none}
.vscroll button svg{width:10px;height:10px}
.track{flex:1;background:#f6f4ec;padding-top:162px}
.thumb{height:22px}
.hscroll{height:17px;flex:none;display:flex;border-top:1px solid #fff}
.hscroll button{width:17px;display:grid;place-items:center}.hscroll button svg{width:12px;height:12px}
.hscroll .on{border-color:#716f64 #fff #fff #716f64;background:#f6f4ec}
.bar{flex:1}.corner{width:19px}
.drawbar{height:28px;flex:none;display:flex;align-items:center;border-top:1px solid var(--shade);border-bottom:1px solid var(--shade);padding-left:1px}
.txt{width:67px;display:flex;align-items:center;justify-content:center;gap:5px}
.auto{width:84px}
.low{padding-top:8px}
.fontA{font:bold 14px "Liberation Serif",serif;text-anchor:middle;fill:#000080}
.status{height:23px;flex:none;display:flex;align-items:center;gap:6px;padding:0 5px;border-top:1px solid #fff}
.f{height:17px;border:1px solid;border-color:var(--shade) #fff #fff var(--shade);display:flex;align-items:center;justify-content:center;white-space:nowrap}
.pos{width:193px;justify-content:space-between;padding:0 22px 0 4px}
.cur-pos{width:166px;justify-content:space-between;padding:0 18px 0 2px}
.off{width:26px;color:var(--shade);text-shadow:1px 1px #fff}.off:nth-child(4){width:31px}
.lang{width:66px}.book{width:43px}.book svg{width:22px;height:14px}.blank{width:35px}
/* taskbar */
.taskbar{height:31px;flex:none;display:flex;align-items:center;color:#fff;background:linear-gradient(#2458c8,#3c84f0 10%,#2663e0 25%,#245edb 80%,#1941a5)}
.start{width:97px;height:29px;border-radius:0 12px 12px 0;background:linear-gradient(#3c8a3c,#5cb85c 15%,#3a963a 40%,#379437 80%,#256825);font:italic bold 17px "Open Sans",var(--ui);display:flex;align-items:center;gap:5px;padding:0 0 2px 10px;text-shadow:1px 1px 2px #143814}
.start svg{width:19px;height:19px}
.grab{width:6px;height:20px;margin:0 7px;background:radial-gradient(circle,#143ca0 1px,transparent 2px) 0 0/3px 5px;flex:none}
.tasks{flex:1;display:flex;gap:3px;min-width:0}
.tasks button{flex:1;min-width:0;height:24px;border-radius:3px;background:linear-gradient(#6aa2fa,#3c81f3 15%,#3b7ef0 80%,#2d66d8);display:flex;align-items:center;gap:5px;padding-left:8px;white-space:nowrap}
.tasks .active{background:#1c4aac}
.en{background:#316ac5;padding:2px 1px;margin-right:17px}
.tray{align-self:stretch;display:flex;align-items:center;gap:3px;width:75px;background:linear-gradient(#1290e0,#18a8f4 15%,#129aec 85%,#0c6cc0);border-left:1px solid #0a50b0}
.tray button{width:18px;height:18px;margin-left:-9px}.tray button svg{width:18px;height:18px}
.bt{width:12px;height:16px;margin-left:4px}.tray time{margin-left:3px}
/* calculator window */
.calc{position:absolute;left:109px;top:157px;width:805px;height:454px;background:#a6caf0;border:solid #0838d0;border-width:0 3px 4px;border-radius:7px 7px 0 0;display:flex;flex-direction:column;font:11px var(--dlg)}
.calc-title{height:29px;flex:none;margin:0 -3px;border-radius:7px 7px 0 0;background:linear-gradient(#0a50d8,#3a8cff 8%,#0054e4 20%,#0058ee 60%,#0066ff 85%,#0040c8);display:flex;align-items:center;gap:3px;padding:2px 5px 0}
.calc-title h2{color:#fff;text-shadow:1px 1px #002a90}
.calc-body{flex:1;min-height:0;display:flex}
.left{width:426px;padding:3px 0 0 4px;flex:none}
.btn{background:var(--face);border:1px solid;border-color:#fff #716f64 #716f64 #fff;box-shadow:inset -1px -1px var(--shade);font-weight:bold;display:inline-flex;align-items:center;justify-content:center;white-space:nowrap}
.mode{display:flex;justify-content:space-between;padding-right:63px}
.mode h3{font:bold 12px/16px var(--ui);color:#00f;padding-left:2px}
.help{width:84px;height:23px;color:#f0f;font-size:12px;gap:6px}.help svg{width:14px;height:18px}
.tabs{display:flex;gap:3px;margin:4px 0 0 -3px;font-size:12px}
.tabs .btn{height:21px}.t1{width:88px}.t2{width:150px}.t3{width:119px}
.tabs .down{border-color:#716f64 #fff #fff #716f64;background:#f6f4ec;box-shadow:inset 1px 1px var(--shade)}
fieldset{margin:0;padding:0;border:1px solid #98948a;box-shadow:1px 1px #fff;min-width:0}
legend{line-height:12px;padding:0 1px}
.scheme{width:417px;height:40px;margin-top:8px;display:grid;grid-template-columns:135px 135px 1fr;padding:2px 0 0 8px}
.scheme legend{margin-left:-2px}
.scheme label{display:flex;align-items:center;gap:11px;height:20px}
.scheme input{appearance:none;width:12px;height:12px;border-radius:50%;background:#fff;border:1px solid;border-color:#716f64 #ddd #ddd #716f64}
.scheme input:checked{background:radial-gradient(circle,#000 2px,#fff 3px)}
.cols{display:flex;margin-top:-2px}
.c1{width:234px}
.conv{display:flex;justify-content:space-between;height:24px;padding-right:1px;color:#00f;font-weight:bold;font-size:15px;line-height:24px}
.conv .btn{width:97px;font:13px var(--dlg);color:var(--shade);text-shadow:1px 1px #fff}
.circuit{display:block}
.node{font:17px "Liberation Serif",serif;stroke:#000;stroke-width:.4px}
.amp text,.volt text,.imp text{font:bold 24px "Liberation Serif",serif}
.amp{fill:#e81010}.amp tspan{font-size:14px;font-weight:normal}.amp .b{font-size:17px;font-weight:bold}
.volt{fill:#3030b0}.volt tspan{font-size:14px}.imp tspan{font-size:20px}
.c2{flex:1;display:flex;flex-direction:column;padding:5px 3px 0 12px}
.blue{color:#00f;line-height:14px;white-space:nowrap}
.urow{display:flex;margin:11px 0 2px 8px;gap:5px;color:#00f;font-weight:bold}
.urow b{font-size:19px;line-height:24px;white-space:nowrap}
.urow input{width:97px;height:21px;background:#fff;padding:0 2px 4px;font-size:12px}
.ok{width:57px;height:21px;align-self:center;margin-right:4px;font-size:12px}
.two{text-align:center;line-height:15px;padding-right:3px}
.zrow{display:flex;justify-content:space-between;align-items:center;height:23px}
.zrow label{font-size:18px;line-height:20px;text-decoration:underline 1px}
.zrow input,.res input:not([type=checkbox]){height:21px;background:#fff;border:1px solid;border-color:#716f64 #fff #fff #716f64;box-shadow:inset 1px 1px var(--shade);padding-left:3px;font-weight:bold;font-size:12px;color:#f00;min-width:0}
.zrow input{width:130px}
.go{width:103px;height:26px;align-self:flex-end;margin:3px -3px 2px 0;border:1px solid #000;box-shadow:inset 1px 1px #fff,inset -1px -1px #716f64;font-size:12px}
.go span{border:1px dotted #000;padding:2px 14px}
.scale{display:flex;gap:9px;padding-left:9px;color:purple;font-weight:bold;line-height:15px;margin-top:-9px;font-size:12px;white-space:nowrap}
.pick{position:relative;width:63px;height:21px;background:#fff;border:1px solid;border-color:#716f64 #fff #fff #716f64;margin-top:11px;flex:none;color:#f00}
.pick::after{content:"";position:absolute;right:1px;top:1px;bottom:1px;width:16px;pointer-events:none;border:1px solid;border-color:#fff #716f64 #716f64 #fff;background:linear-gradient(#000,#000) 3px 6px/7px 1px no-repeat,linear-gradient(#000,#000) 4px 7px/5px 1px no-repeat,linear-gradient(#000,#000) 5px 8px/3px 1px no-repeat,linear-gradient(#000,#000) 6px 9px/1px 1px no-repeat,var(--face)}
.res-head{display:flex;gap:12px;color:#f00;padding-left:55px;line-height:14px;margin:2px 0 3px}
.res{display:grid;grid-template-columns:20px 25px 156px 8px 18px 35px 156px;row-gap:3px;align-items:center;padding-left:2px;font-size:12px}
.res>:nth-child(6n+4){grid-column:5}
.res label{font-weight:bold;color:#f00;text-decoration:underline}
.res .bl.bl.bl{color:#00f}
.res input[type=checkbox]{appearance:none;width:13px;height:13px;background:#fff;border:1px solid;border-color:#716f64 #fff #fff #716f64;display:grid;place-items:center}
.res input[type=checkbox]::before{content:"";width:4px;height:7px;border:solid #000;border-width:0 2px 2px 0;transform:rotate(40deg);margin-top:-2px}
.right{flex:1;padding:0 9px 0 0}
.hints{width:360px;height:57px;color:#f00;display:flex;gap:6px;padding:0 0 0 5px}
.hints legend{color:#000}
.hints dl{width:178px;display:grid;grid-template-columns:auto auto;line-height:14px;justify-content:space-between;white-space:nowrap;margin-top:-1px;height:42px}
.hints dd{text-align:right}
.forms{display:flex;flex-direction:column;gap:8px;line-height:14px;padding-top:2px;white-space:nowrap}
.plot{width:363px;background:#fff;margin:3px 0 0 2px;padding-bottom:1px}
.plot legend{font-weight:bold;font-size:12px;margin-left:7px}
.plot svg{display:block;overflow:visible}
.pl{font:bold 12px var(--dlg)}.pl .r{fill:#f00;text-decoration:underline}.pl .b{fill:#00f;text-decoration:underline}.pl .ax{fill:#008080;font-size:14px}
.calc-foot{height:18px;flex:none;background:#c0c0c0;text-align:center;font-weight:bold;line-height:19px;padding-right:4px}
```
